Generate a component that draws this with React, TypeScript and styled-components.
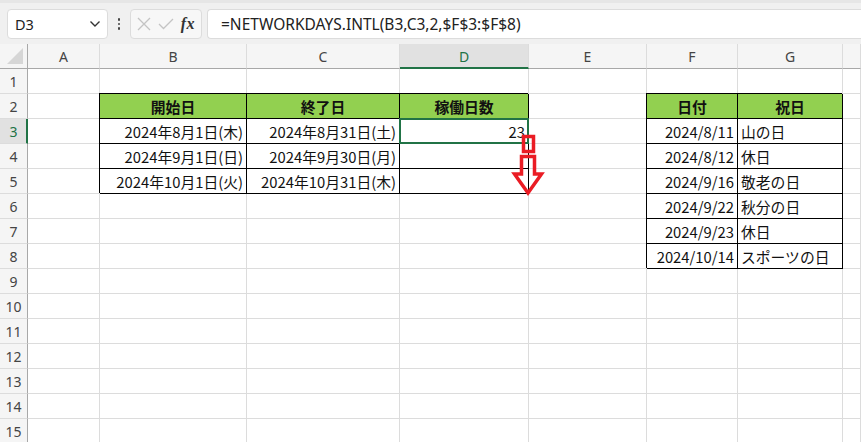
import React from 'react'
import styled, { createGlobalStyle } from 'styled-components'

const GlobalStyle = createGlobalStyle`
  html, body {
    margin: 0;
    padding: 0;
    background: #ffffff;
    overflow: hidden;
  }
  * {
    box-sizing: border-box;
  }
`

const COLS = ['A', 'B', 'C', 'D', 'E', 'F', 'G', '']
const WIDTHS = '28px 72px 147px 153px 129px 118px 91px 105px 1fr'

type Kind = 'head' | 'right' | 'left'

interface CellData {
  text: string
  kind: Kind
}

const cells: Record<string, CellData> = {
  B2: { text: '開始日', kind: 'head' },
  C2: { text: '終了日', kind: 'head' },
  D2: { text: '稼働日数', kind: 'head' },
  F2: { text: '日付', kind: 'head' },
  G2: { text: '祝日', kind: 'head' },
  B3: { text: '2024年8月1日(木)', kind: 'right' },
  C3: { text: '2024年8月31日(土)', kind: 'right' },
  D3: { text: '23', kind: 'right' },
  B4: { text: '2024年9月1日(日)', kind: 'right' },
  C4: { text: '2024年9月30日(月)', kind: 'right' },
  D4: { text: '', kind: 'right' },
  B5: { text: '2024年10月1日(火)', kind: 'right' },
  C5: { text: '2024年10月31日(木)', kind: 'right' },
  D5: { text: '', kind: 'right' },
  F3: { text: '2024/8/11', kind: 'right' },
  F4: { text: '2024/8/12', kind: 'right' },
  F5: { text: '2024/9/16', kind: 'right' },
  F6: { text: '2024/9/22', kind: 'right' },
  F7: { text: '2024/9/23', kind: 'right' },
  F8: { text: '2024/10/14', kind: 'right' },
  G3: { text: '山の日', kind: 'left' },
  G4: { text: '休日', kind: 'left' },
  G5: { text: '敬老の日', kind: 'left' },
  G6: { text: '秋分の日', kind: 'left' },
  G7: { text: '休日', kind: 'left' },
  G8: { text: 'スポーツの日', kind: 'left' },
}

const App: React.FC = () => {
  const rows = Array.from({ length: 15 }, (_, i) => i + 1)

  return (
    <Page>
      <GlobalStyle />
      <Toolbar>
        <NameBox>
          <span>D3</span>
          <svg width="12" height="8" viewBox="0 0 12 8">
            <path d="M1.5 1.5 L6 6 L10.5 1.5" fill="none" stroke="#333" strokeWidth="1.4" />
          </svg>
        </NameBox>
        <Dots>
          <i />
          <i />
          <i />
        </Dots>
        <FxButtons>
          <svg width="14" height="14" viewBox="0 0 14 14">
            <path d="M1 1 L13 13 M13 1 L1 13" stroke="#c4c4c4" strokeWidth="1.3" />
          </svg>
          <svg width="16" height="12" viewBox="0 0 16 12">
            <path d="M1 6 L5.5 10.5 L15 1" fill="none" stroke="#c4c4c4" strokeWidth="1.3" />
          </svg>
          <FxLabel>fx</FxLabel>
        </FxButtons>
        <FormulaBar>=NETWORKDAYS.INTL(B3,C3,2,$F$3:$F$8)</FormulaBar>
      </Toolbar>

      <Sheet>
        <Corner>
          <svg width="18" height="17" viewBox="0 0 18 17">
            <polygon points="1,16 17,16 17,0" fill="#d6d6d6" />
          </svg>
        </Corner>
        {COLS.map((c) => (
          <ColHeader key={c || 'H'} $active={c === 'D'}>
            {c}
          </ColHeader>
        ))}

        {rows.map((r) => (
          <React.Fragment key={r}>
            <RowHeader $active={r === 3}>{r}</RowHeader>
            {COLS.map((c) => {
              const data = cells[c + r]
              return (
                <Cell
                  key={c + r}
                  $boxed={!!data}
                  $kind={data?.kind}
                  $selected={c + r === 'D3'}
                >
                  {data?.text}
                </Cell>
              )
            })}
          </React.Fragment>
        ))}
      </Sheet>

      <Arrow width="861" height="442" viewBox="0 0 861 442">
        <rect x="523.5" y="136.5" width="10" height="15" fill="none" stroke="#ea1c24" strokeWidth="3.5" />
        <path
          d="M521.5 156.5 L534.5 156.5 L534.5 174 L541.5 174 L528 193 L514.5 174 L521.5 174 Z"
          fill="none"
          stroke="#ea1c24"
          strokeWidth="3.5"
          strokeLinejoin="miter"
        />
      </Arrow>
    </Page>
  )
}

export default App

const Page = styled.div`
  position: relative;
  width: 861px;
  height: 442px;
  overflow: hidden;
  background: #ffffff;
`

const Toolbar = styled.div`
  height: 44px;
  display: flex;
  align-items: center;
  padding: 0 0 0 7px;
  background: #f0f0f0;
  border-top: 3px solid #e6e6e6;
  font-family: 'Noto Sans', 'Open Sans', sans-serif;
`

const NameBox = styled.div`
  width: 101px;
  height: 30px;
  margin-top: 1px;
  background: #ffffff;
  border: 1px solid #dcdcdc;
  border-radius: 4px;
  display: flex;
  align-items: center;
  justify-content: space-between;
  padding: 0 6px 0 7px;
  font-size: 14.5px;
  color: #222;
`

const Dots = styled.div`
  width: 22px;
  display: flex;
  flex-direction: column;
  align-items: center;
  gap: 2px;
  margin-top: 1px;

  i {
    display: block;
    width: 2.5px;
    height: 2.5px;
    border-radius: 50%;
    background: #444;
  }
`

const FxButtons = styled.div`
  width: 72px;
  height: 30px;
  margin-top: 1px;
  background: #f7f7f7;
  border: 1px solid #dcdcdc;
  border-radius: 4px;
  display: flex;
  align-items: center;
  justify-content: space-between;
  padding: 0 6px 0 6px;
`

const FxLabel = styled.span`
  font-family: 'Liberation Serif', 'DejaVu Serif', serif;
  font-style: italic;
  font-weight: bold;
  font-size: 16px;
  color: #333;
  letter-spacing: 0.5px;
`

const FormulaBar = styled.div`
  flex: 1;
  height: 30px;
  margin-top: 1px;
  margin-left: 5px;
  background: #ffffff;
  border: 1px solid #dcdcdc;
  border-right: none;
  border-radius: 4px 0 0 4px;
  display: flex;
  align-items: center;
  padding-left: 13px;
  font-size: 15.5px;
  color: #222;
`

const Sheet = styled.div`
  display: grid;
  grid-template-columns: ${WIDTHS};
  grid-auto-rows: 25px;
  font-family: 'Noto Sans CJK JP', 'Noto Sans', sans-serif;
`

const Corner = styled.div`
  background: #f5f5f5;
  border-right: 1px solid #a8a8a8;
  border-bottom: 1px solid #a8a8a8;
  display: flex;
  align-items: flex-end;
  justify-content: flex-end;
  padding: 0 3px 3px 0;
`

const ColHeader = styled.div<{ $active: boolean }>`
  background: ${(p) => (p.$active ? '#e1e1e1' : '#f5f5f5')};
  border-right: 1px solid #dcdcdc;
  border-bottom: ${(p) => (p.$active ? '2px solid #217346' : '1px solid #a8a8a8')};
  display: flex;
  align-items: center;
  justify-content: center;
  font-family: 'Noto Sans', 'Open Sans', sans-serif;
  font-size: 14px;
  color: ${(p) => (p.$active ? '#217346' : '#444')};
  padding-top: ${(p) => (p.$active ? '1px' : '0')};
`

const RowHeader = styled.div<{ $active: boolean }>`
  background: ${(p) => (p.$active ? '#e1e1e1' : '#f5f5f5')};
  border-right: ${(p) => (p.$active ? '2px solid #217346' : '1px solid #a8a8a8')};
  border-bottom: 1px solid #dcdcdc;
  display: flex;
  align-items: center;
  justify-content: center;
  font-family: 'Noto Sans', 'Open Sans', sans-serif;
  font-size: 14px;
  color: ${(p) => (p.$active ? '#217346' : '#444')};
  padding-left: ${(p) => (p.$active ? '1px' : '0')};
`

const Cell = styled.div<{ $boxed: boolean; $kind?: Kind; $selected: boolean }>`
  position: relative;
  border-right: 1px solid ${(p) => (p.$boxed ? '#000' : '#dcdcdc')};
  border-bottom: 1px solid ${(p) => (p.$boxed ? '#000' : '#dcdcdc')};
  box-shadow: ${(p) => (p.$boxed ? '-1px -1px 0 0 #000' : 'none')};
  background: ${(p) => (p.$kind === 'head' ? '#92d050' : '#ffffff')};
  display: flex;
  align-items: center;
  justify-content: ${(p) =>
    p.$kind === 'head' ? 'center' : p.$kind === 'left' ? 'flex-start' : 'flex-end'};
  padding: 0 3px 0 3px;
  font-size: 14.8px;
  font-weight: ${(p) => (p.$kind === 'head' ? 700 : 400)};
  color: #111;
  white-space: nowrap;

  ${(p) =>
    p.$selected &&
    `
    z-index: 1;
    &::after {
      content: '';
      position: absolute;
      inset: -1px;
      border: 2px solid #217346;
      pointer-events: none;
    }
  `}
`

const Arrow = styled.svg`
  position: absolute;
  left: 0;
  top: 0;
  pointer-events: none;
  z-index: 2;
`
